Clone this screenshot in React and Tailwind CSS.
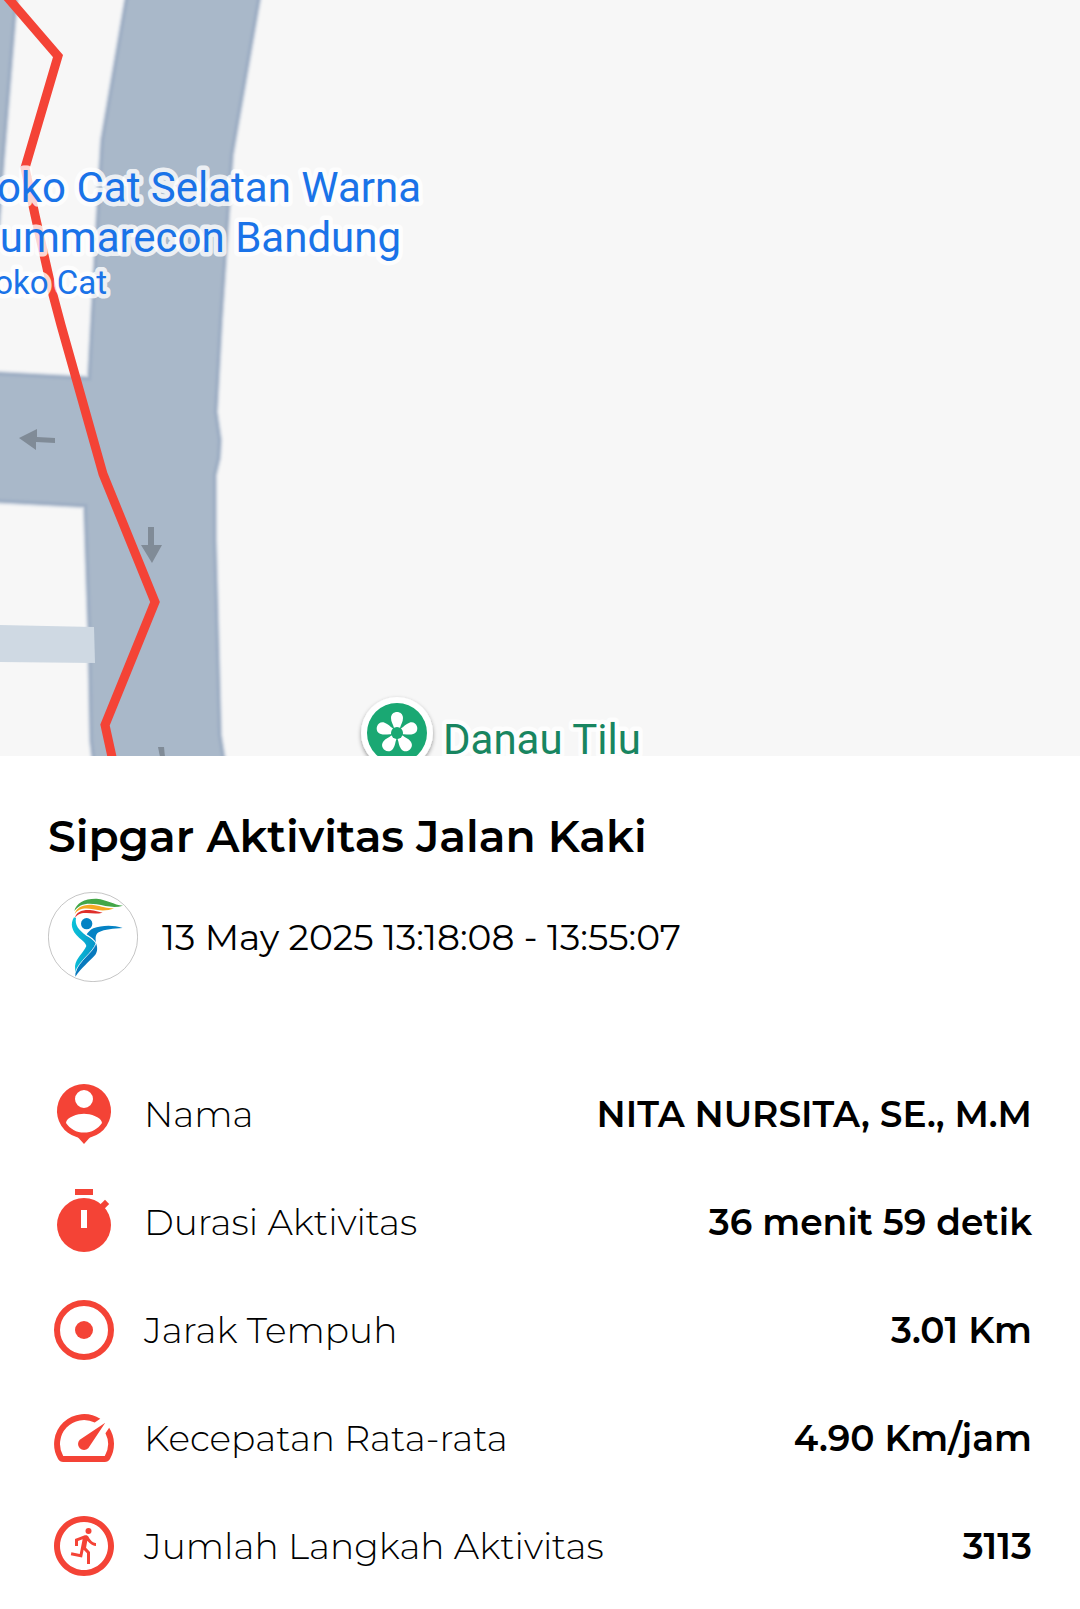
import React from "react";
import { MdSpeed, MdOutlineRunCircle } from "react-icons/md";

const ROAD =
  "M127 -10 L125 0 L101 140 L98 190 L91 320 L88 377 L-10 372 L-10 502 L84 507 L88 630 L90 740 L93 766 L226 766 L221 735 L216 540 L216 475 L220 458 L221 440 L217 412 L222 320 L233 155 L260 0 L262 -10 Z";
const SIDE_ROAD = "M18 -10 L17 0 L4 160 L-1 230 L-10 230 L-10 -10 Z";
const PETALS = [0, 72, 144, 216, 288];

function RouteMap() {
  return (
    <svg
      viewBox="0 0 1080 756"
      className="block w-full bg-[#f7f7f7] font-['Roboto',sans-serif]"
      role="img"
      aria-label="Peta rute aktivitas"
    >
      <defs>
        <clipPath id="roads">
          <path d={ROAD} />
          <path d={SIDE_ROAD} />
        </clipPath>
        <filter id="softEdge" x="-5%" y="-5%" width="110%" height="110%">
          <feGaussianBlur stdDeviation="1" />
        </filter>
        <filter id="pinShadow" x="-30%" y="-30%" width="160%" height="160%">
          <feDropShadow dx="0" dy="2" stdDeviation="2" floodOpacity="0.4" />
        </filter>
      </defs>

      <g filter="url(#softEdge)">
        <g stroke="#d9dfe7" strokeWidth="4" fill="#a9b8c9">
          <path d={ROAD} />
          <path d={SIDE_ROAD} />
        </g>
        <g clipPath="url(#roads)" fill="#a9b8c9" stroke="#9fafc4" strokeWidth="7">
          <path d={ROAD} />
          <path d={SIDE_ROAD} />
        </g>
      </g>
      <path d="M0 625 L94 627 L95 663 L0 662 Z" fill="#cfd9e3" />

      <g fill="#808b97">
        <path d="M19 438 L37 429 L37 437 L55 438 L55 443 L36 442 L36 450 Z" />
        <path d="M148 527 H154 V545 H162 L152 563 L141 545 H148 Z" />
        <path d="M158 747 H164 L165 757 H160 Z" />
      </g>

      <polyline
        points="2,-9 58,56 25,168 35,215 53,295 61,325 103,474 155,602 105,725 114,766"
        fill="none"
        stroke="#f44336"
        strokeWidth="9"
        strokeLinejoin="miter"
      />

      <g
        fill="#1a73e8"
        stroke="#ffffff"
        strokeOpacity="0.8"
        strokeWidth="9"
        strokeLinejoin="round"
        paintOrder="stroke"
      >
        <text x="421" y="202" fontSize="42" textAnchor="end">oko Cat Selatan Warna</text>
        <text x="401" y="252" fontSize="42" textAnchor="end">ummarecon Bandung</text>
        <text x="107" y="294" fontSize="33" textAnchor="end">oko Cat</text>
      </g>

      <circle cx="397" cy="733" r="36" fill="#ffffff" filter="url(#pinShadow)" />
      <circle cx="397" cy="733" r="30" fill="#1aa873" />
      <g transform="translate(397 733)" fill="#ffffff">
        {PETALS.map((angle) => (
          <path
            key={angle}
            transform={`rotate(${angle})`}
            d="M-3 -5 C-4 -9 -6 -11 -6 -15 C-6 -19 -3 -21 0 -21 C3 -21 6 -19 6 -15 C6 -11 4 -9 3 -5 Z"
          />
        ))}
        <circle r="6" fill="#1aa873" />
      </g>
      <text
        x="443"
        y="754"
        fontSize="42"
        fill="#188560"
        stroke="#ffffff"
        strokeOpacity="0.8"
        strokeWidth="9"
        strokeLinejoin="round"
        paintOrder="stroke"
      >
        Danau Tilu
      </text>
    </svg>
  );
}

function Logo() {
  return (
    <svg viewBox="54 303 270 270" className="size-[90px] shrink-0" aria-hidden="true">
      <defs>
        <linearGradient id="cyan" x1="0" y1="0" x2="1" y2="0">
          <stop offset="0" stopColor="#0cc3d8" />
          <stop offset="1" stopColor="#0794c9" />
        </linearGradient>
      </defs>
      <circle cx="189" cy="438" r="134" fill="#fff" stroke="#a8a8a8" strokeWidth="2" />
      <path fill="#43a648" d="M133 360 C138 336 165 322 200 323 C232 326 250 341 279 344 C252 352 226 345 200 340 C168 334 146 341 133 360 Z" />
      <path fill="#f6a823" d="M134 370 C138 350 160 339 190 342 C215 346 232 352 252 352 C234 360 210 360 190 355 C163 350 145 353 134 370 Z" />
      <path fill="#df2f2b" d="M135 381 C138 363 155 356 180 357 C195 358 206 363 218 365 C200 370 185 367 170 366 C152 365 142 370 135 381 Z" />
      <circle cx="170" cy="398" r="17" fill="#0482c4" />
      <path fill="#0482c4" d="M278 411 C250 401 215 402 190 412 C180 417 174 424 170 430 C185 440 194 448 198 456 C196 441 196 430 206 424 C225 414 250 413 278 411 Z" />
      <path fill="url(#cyan)" d="M132 379 C120 398 124 420 148 441 C160 451 168 458 169 465 C162 484 138 500 135 525 L136 546 C142 516 190 484 197 457 C190 446 180 440 169 434 C145 416 134 402 138 381 Z" />
      <path fill="#0879bd" d="M136 557 C133 530 165 500 182 482 C190 473 195 465 198 457 C203 468 203 482 196 491 C176 513 154 530 136 557 Z" />
      <path fill="none" stroke="#fff" strokeWidth="2" d="M172 433 C186 441 195 448 198 457 C192 482 143 512 136 545" />
    </svg>
  );
}

function PersonIcon() {
  return (
    <svg viewBox="0 0 24 24" fill="currentColor" aria-hidden="true">
      <path
        fillRule="evenodd"
        d="M12 2a9 9 0 0 0-2.5 17.65c.35.1.6.25.85.5L12 22l1.650-1.850c.25-.25.5-.4.85-.5A9 9 0 0 0 12 2zM12 4a3 3 0 1 1 0 6 3 3 0 0 1 0-6zM6 14.980c.03-1.990 4-3.080 6-3.080s5.970 1.090 6 3.080c-1.290 1.940-3.500 3.220-6 3.220s-4.710-1.280-6-3.220z"
      />
    </svg>
  );
}

function TimerIcon() {
  return (
    <svg viewBox="0 0 24 24" fill="currentColor" aria-hidden="true">
      <path d="M9 1h6v2H9z" />
      <path d="M18.300 8.100L16.900 6.700l2.100-2.100 1.400 1.400z" />
      <circle cx="12" cy="13" r="9" />
      <path d="M11 8h2v6h-2z" fill="#fff" />
    </svg>
  );
}

function TargetIcon() {
  return (
    <svg viewBox="0 0 24 24" aria-hidden="true">
      <circle cx="12" cy="12" r="9" fill="none" stroke="currentColor" strokeWidth="2" />
      <circle cx="12" cy="12" r="3" fill="currentColor" />
    </svg>
  );
}

const STATS = [
  { icon: PersonIcon, label: "Nama", value: "NITA NURSITA, SE., M.M" },
  { icon: TimerIcon, label: "Durasi Aktivitas", value: "36 menit 59 detik" },
  { icon: TargetIcon, label: "Jarak Tempuh", value: "3.01 Km" },
  { icon: MdSpeed, label: "Kecepatan Rata-rata", value: "4.90 Km/jam" },
  { icon: MdOutlineRunCircle, label: "Jumlah Langkah Aktivitas", value: "3113" },
];

export default function App() {
  return (
    <main className="min-h-screen bg-white font-['Montserrat','Inter',sans-serif] text-black">
      <RouteMap />
      <section className="px-12 pt-12">
        <h1 className="text-[44px] leading-[64px] font-semibold">Sipgar Aktivitas Jalan Kaki</h1>
        <div className="mt-6 flex items-center gap-6">
          <Logo />
          <p className="text-[36px] leading-[48px] font-normal">13 May 2025 13:18:08 - 13:55:07</p>
        </div>
        <dl className="mt-24 flex flex-col gap-9">
          {STATS.map(({ icon: Icon, label, value }) => (
            <div key={label} className="flex items-center gap-6">
              <dt className="flex flex-1 items-center gap-6 text-[36px] leading-[48px] font-light">
                <span className="size-[72px] shrink-0 text-[#f44336] [&>svg]:size-full">
                  <Icon />
                </span>
                {label}
              </dt>
              <dd className="text-right text-[36px] leading-[48px] font-semibold">{value}</dd>
            </div>
          ))}
        </dl>
      </section>
    </main>
  );
}
